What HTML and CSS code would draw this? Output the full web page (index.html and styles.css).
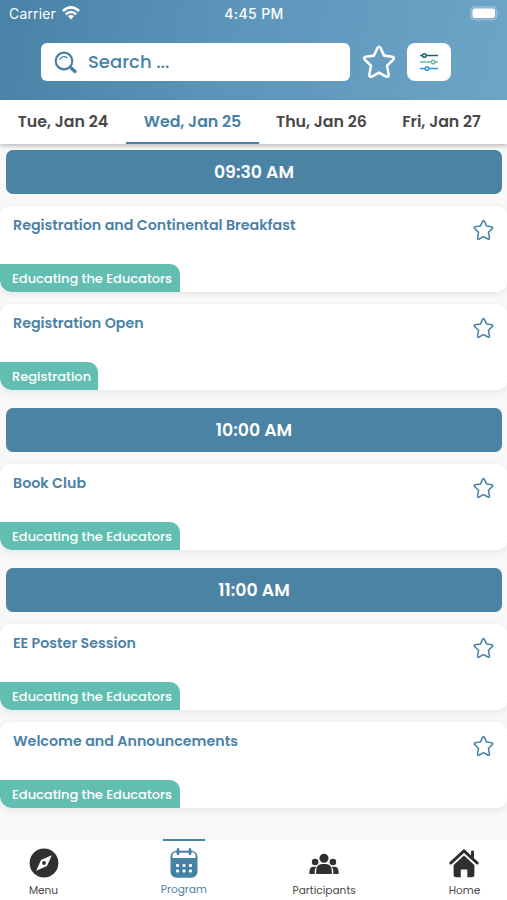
FILE: index.html
```html
<!DOCTYPE html>
<html lang="en">
<head>
<meta charset="utf-8">
<meta name="viewport" content="width=device-width, initial-scale=1">
<title>Program</title>
<link rel="stylesheet" href="styles.css">
</head>
<body>
<svg class="defs" aria-hidden="true">
  <symbol id="star" viewBox="0 0 24 24"><path d="M10.9 2.1Q12 0.5 13.1 2.1L15.6 7.5L21.3 8.3Q23.4 8.9 22 10.4L17.7 14.6L18.8 20.9Q18.9 23 17 22.3L12 19.5L7 22.3Q5.1 23 5.2 20.9L6.3 14.6L2 10.4Q.6 8.9 2.7 8.3L8.4 7.5Z" fill="none" stroke="currentColor" stroke-linejoin="round"/></symbol>
</svg>
<div class="app">
  <header class="top">
    <div class="status">
      <div class="carrier"><span>Carrier</span>
        <svg width="18" height="14" viewBox="0 0 18 14" fill="none" stroke="#fff" stroke-width="2.5"><path d="M.9 5Q9-2.3 17.1 5M3.8 8.2Q9 3.7 14.2 8.2"/><path d="M5.9 10.1Q9 7.7 12.1 10.1L9 13.5Z" fill="#fff" stroke="none"/></svg>
      </div>
      <span class="clock">4:45 PM</span>
      <svg class="battery" width="31" height="15" viewBox="0 0 31 15"><rect x=".8" y=".8" width="26" height="13" rx="4" fill="#82afcd" stroke="#a3c5dc"/><rect x="2.5" y="2.6" width="22.5" height="9.4" rx="2.5" fill="#fff"/><path d="M28.5 5q2 2.3 0 4.6z" fill="#a3c5dc"/></svg>
    </div>
    <div class="tools">
      <div class="search">
        <svg width="24" height="24" viewBox="0 0 24 24" fill="none" stroke="#4782a6"><circle cx="10" cy="10" r="8.3" stroke-width="2.2"/><path d="M5.8 8.4Q8.5 4.2 13 6.6" stroke-width="1.2" stroke-linecap="round"/><path d="M15.8 15.5L18 17.6" stroke-width="2"/><path d="M17.5 17.2L21 20.4" stroke-width="3.4" stroke-linecap="round"/></svg>
        <span>Search ...</span>
      </div>
      <svg class="fav"><use href="#star"/></svg>
      <div class="filter">
        <svg width="20" height="20" viewBox="0 0 20 20" fill="#fff" stroke-width="1.5"><g stroke="#285e75"><path d="M1 3.5H19"/><circle cx="5.3" cy="3.5" r="1.8"/></g><g stroke="#66bea9"><path d="M1 10H19"/><circle cx="14.2" cy="10" r="1.8"/></g><g stroke="#2b97e5"><path d="M1 16.5H19"/><circle cx="8" cy="16.5" r="1.8"/></g></svg>
      </div>
    </div>
  </header>
  <nav class="tabs">
    <div class="tab"><span>Tue, Jan 24</span></div>
    <div class="tab active"><span>Wed, Jan 25</span></div>
    <div class="tab thu"><span>Thu, Jan 26</span></div>
    <div class="tab fri"><span>Fri, Jan 27</span></div>
  </nav>
  <main class="schedule">
    <section>
      <h2>09:30 AM</h2>
      <article><h3>Registration and Continental Breakfast</h3><svg class="save"><use href="#star"/></svg><span class="tag">Educating the Educators</span></article>
      <article><h3>Registration Open</h3><svg class="save"><use href="#star"/></svg><span class="tag short">Registration</span></article>
    </section>
    <section>
      <h2>10:00 AM</h2>
      <article><h3>Book Club</h3><svg class="save"><use href="#star"/></svg><span class="tag">Educating the Educators</span></article>
    </section>
    <section>
      <h2>11:00 AM</h2>
      <article><h3>EE Poster Session</h3><svg class="save"><use href="#star"/></svg><span class="tag">Educating the Educators</span></article>
      <article><h3>Welcome and Announcements</h3><svg class="save"><use href="#star"/></svg><span class="tag">Educating the Educators</span></article>
    </section>
  </main>
  <nav class="bottom">
    <div class="item menu">
      <svg width="30" height="30" viewBox="0 0 30 30"><circle cx="15" cy="15" r="14.4" fill="#303030"/><path d="M22.8 7.2L18 18L7.2 22.8L12 12Z" fill="#fff"/><circle cx="15" cy="15" r="1.9" fill="#303030"/></svg>
      <span>Menu</span>
    </div>
    <div class="item program">
      <svg width="30" height="32" viewBox="0 0 30 32"><rect x="1.5" y="3.8" width="27" height="27" rx="6" fill="#4782a6"/><path d="M3.5 11V9Q3.5 5.2 7 5.2H23Q26.5 5.2 26.5 9V11Z" fill="#fff"/><path d="M9 2.2V7M21 2.2V7" stroke="#4782a6" stroke-width="2.5" stroke-linecap="round"/><path d="M7 4.8H23" stroke="#4782a6" stroke-width="1.7"/><g fill="#fff"><rect x="7" y="17" width="3" height="3" rx="1"/><rect x="13.5" y="17" width="3" height="3" rx="1"/><rect x="20" y="17" width="3" height="3" rx="1"/><rect x="7" y="22.5" width="3" height="3" rx="1"/><rect x="13.5" y="22.5" width="3" height="3" rx="1"/><rect x="20" y="22.5" width="3" height="3" rx="1"/></g></svg>
      <span>Program</span>
    </div>
    <div class="item people">
      <svg width="30" height="30" viewBox="0 0 30 30" fill="#303030"><circle cx="15" cy="10.2" r="4.5"/><circle cx="6.1" cy="14" r="3.3"/><circle cx="23.9" cy="14" r="3.3"/><path d="M7.2 26V22.5Q7.4 16 13 16H17Q22.6 16 22.8 22.5V26ZM.4 26V23.5Q.6 18.7 4.5 18.7H7.3Q5.7 20.8 5.7 23V26ZM24.3 26V23Q24.3 20.8 22.7 18.7H25.5Q29.4 18.7 29.6 23.5V26Z"/></svg>
      <span>Participants</span>
    </div>
    <div class="item home">
      <svg width="30" height="30" viewBox="0 0 30 30"><path d="M22 3.7Q22 2.4 23.5 2.4Q25 2.4 25 3.7V10.5L22 8Z" fill="#303030"/><path d="M4.6 15.4L15 5.8L25.4 15.4V27Q25.4 29.3 23 29.3H18.3V21.5H11.8V29.3H7Q4.6 29.3 4.6 27Z" fill="#303030"/><path d="M2.8 17.6L15 6.4L27.2 17.6" fill="none" stroke="#fff" stroke-width="1.5"/><path d="M1.8 15L15 2.9L28.2 15" fill="none" stroke="#303030" stroke-width="3" stroke-linecap="round" stroke-linejoin="round"/></svg>
      <span>Home</span>
    </div>
  </nav>
</div>
</body>
</html>
```
FILE: styles.css
```css
* { box-sizing: border-box; }
body { margin: 0; font-family: Poppins, Inter, sans-serif; color: #484848; background: #f8f8f8; }
.defs { position: absolute; width: 0; height: 0; }
svg { display: block; flex-shrink: 0; }
span, h2, h3 { white-space: nowrap; }
.app { width: 507px; height: 900px; display: flex; flex-direction: column; overflow: hidden; }
.top { height: 100px; background: linear-gradient(100deg, #4882a6 0%, #5b95b9 45%, #6da5c8 100%); color: #fff; }
.status { height: 28px; padding: 0 6px 2px 9px; display: grid; grid-template-columns: 1fr auto 1fr; align-items: center; font-size: 14px; }
.carrier { display: flex; gap: 6px; align-items: center; font-family: Inter, sans-serif; letter-spacing: .15px; }
.clock { font-family: Inter, sans-serif; font-weight: 500; letter-spacing: .4px; margin-right: 2px; }
.battery { justify-self: end; }
.tools { display: flex; align-items: center; height: 38px; margin-top: 15px; padding-left: 41px; }
.search { width: 309px; height: 38px; border-radius: 6px; background: #fff; color: #4782a6; display: flex; align-items: center; padding: 0 0 1px 13px; font-size: 18px; font-weight: 500; gap: 10px; }
.search svg { margin-top: 2px; }
.fav { width: 34px; height: 34px; margin-left: 12px; stroke-width: 1.8; }
.filter { width: 44px; height: 38px; border-radius: 8px; background: #fff; margin-left: 11px; display: grid; place-items: center; }
.tabs { height: 44px; background: #fff; display: flex; position: relative; box-shadow: 0 2px 4px rgba(0,0,0,.24); font-size: 15.8px; font-weight: 600; }
.tab { width: 126px; display: flex; align-items: center; justify-content: center; border-bottom: 2px solid transparent; padding-top: 1px; }
.tab.active { width: 133px; color: #4782a6; border-color: #4782a6; }
.tab.thu { width: 125px; }
.tab.fri { width: 115px; }
.schedule { padding-top: 6px; flex: 1; }
section { margin-bottom: 18px; }
h2 { height: 44px; margin: 0 5px 12px 6px; border-radius: 7px; background: #4b83a5; color: #fff; font-size: 17.3px; font-weight: 600; display: flex; align-items: center; justify-content: center; }
article { height: 86px; background: #fff; border-radius: 10px; margin-bottom: 12px; padding: 8px 13px 0; display: grid; grid-template-columns: 1fr 21px; grid-template-rows: 50px 28px; box-shadow: 0 2px 7px rgba(0,0,0,.075); overflow: hidden; }
h3 { margin: 0; color: #4b82a8; font-size: 14.25px; line-height: 22px; font-weight: 600; }
.save { width: 21px; height: 22px; color: #4b82a8; stroke-width: 1.8; margin-top: 5px; }
.tag { grid-column: 1; justify-self: start; margin-left: -13px; width: 180px; height: 28px; padding-left: 12px; background: #61beb1; color: #fff; border-radius: 0 10px 0 12px; font-size: 13px; line-height: 29px; font-weight: 500; }
.tag.short { width: 98px; }
.bottom { height: 60px; background: #fff; display: flex; justify-content: space-between; padding: 0 6px 0 7px; font-size: 10.6px; }
.item { width: 73px; display: flex; flex-direction: column; align-items: center; padding-top: 8px; }
.item span { line-height: 16px; margin-top: 5px; }
.program { color: #4782a6; padding-top: 7px; position: relative; }
.program::before { content: ""; position: absolute; top: -1px; width: 42px; height: 2px; background: #4782a6; }
.program span { margin-top: 3px; }
```
